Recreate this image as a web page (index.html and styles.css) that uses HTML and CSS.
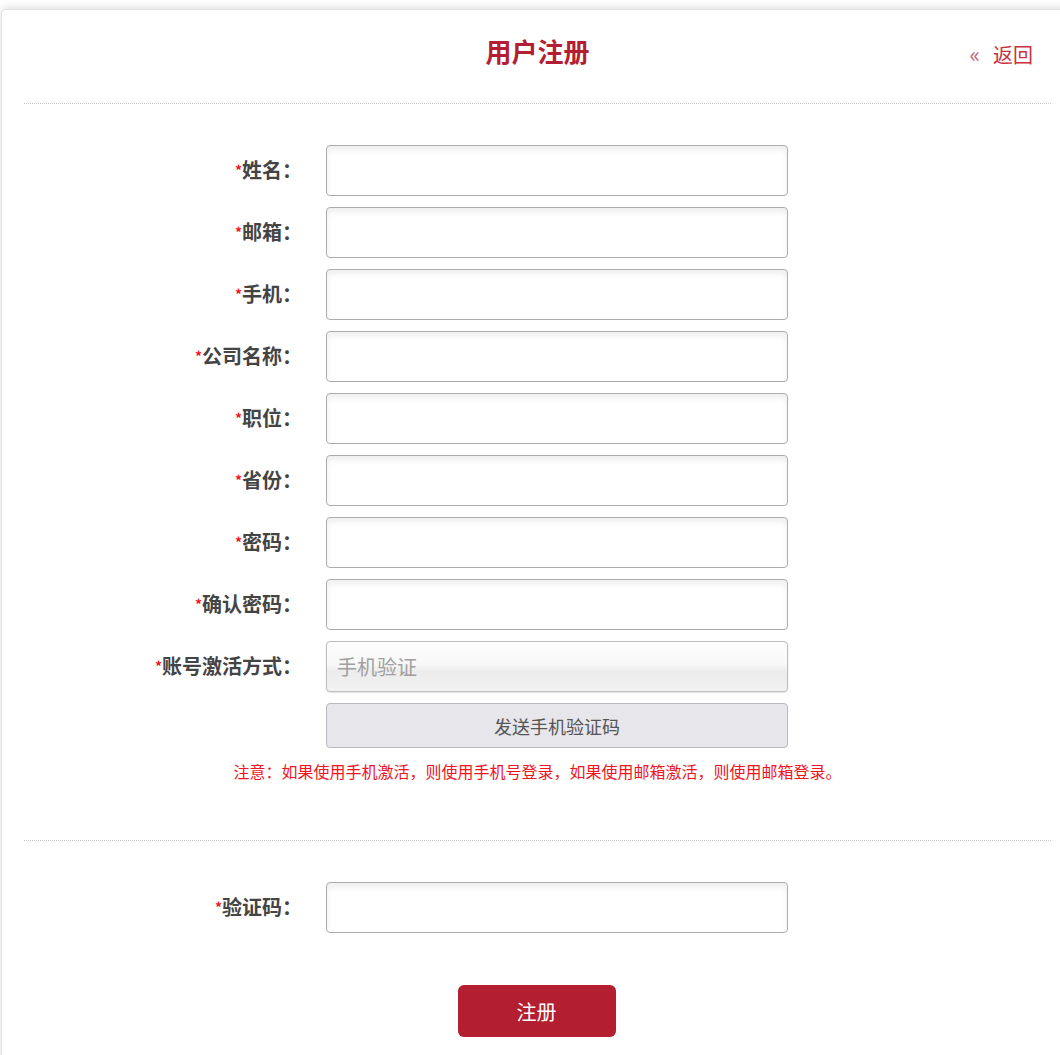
FILE: index.html
```html
<!DOCTYPE html>
<html lang="zh-CN">
<head>
  <meta charset="UTF-8" />
  <title>用户注册</title>
  <link rel="stylesheet" href="styles.css">
</head>
<body>

  <div class="card">
    <header class="card-head">
      <h1>用户注册</h1>
      <a class="back" href="#"><span class="back-arrow">«</span>返回</a>
    </header>

    <form class="reg-form">
      <section class="form-part">
        <div class="row">
          <label class="label"><i>*</i>姓名：</label>
          <input class="field" type="text">
        </div>
        <div class="row">
          <label class="label"><i>*</i>邮箱：</label>
          <input class="field" type="text">
        </div>
        <div class="row">
          <label class="label"><i>*</i>手机：</label>
          <input class="field" type="text">
        </div>
        <div class="row">
          <label class="label"><i>*</i>公司名称：</label>
          <input class="field" type="text">
        </div>
        <div class="row">
          <label class="label"><i>*</i>职位：</label>
          <input class="field" type="text">
        </div>
        <div class="row">
          <label class="label"><i>*</i>省份：</label>
          <input class="field" type="text">
        </div>
        <div class="row">
          <label class="label"><i>*</i>密码：</label>
          <input class="field" type="password">
        </div>
        <div class="row">
          <label class="label"><i>*</i>确认密码：</label>
          <input class="field" type="password">
        </div>
        <div class="row">
          <label class="label"><i>*</i>账号激活方式：</label>
          <div class="field select">手机验证</div>
        </div>
        <div class="row">
          <span class="label"></span>
          <button class="send-btn" type="button">发送手机验证码</button>
        </div>
        <p class="note">注意：如果使用手机激活，则使用手机号登录，如果使用邮箱激活，则使用邮箱登录。</p>
      </section>

      <section class="form-part">
        <div class="row">
          <label class="label"><i>*</i>验证码：</label>
          <input class="field" type="text">
        </div>
        <div class="actions">
          <button class="submit-btn" type="button">注册</button>
        </div>
      </section>
    </form>
  </div>

</body>
</html>
```

FILE: styles.css
```css
* {
  margin: 0;
  padding: 0;
  box-sizing: border-box;
}

html, body {
  overflow: hidden;
}

body {
  font-family: "Noto Sans CJK SC", "Noto Sans", sans-serif;
  background-color: #fff;
  color: #444;
  padding-top: 9px;
}

.card {
  width: 1073px;
  margin-left: 1px;
  padding: 0 22px;
  min-height: 1060px;
  background-color: #fff;
  border: 1px solid #e2e2e2;
  border-radius: 5px 5px 0 0;
  box-shadow: 0 -2px 9px rgba(0,0,0,0.12);
}

.card-head {
  height: 94px;
  border-bottom: 1px dotted #c8c8c8;
  display: flex;
  align-items: center;
  justify-content: center;
  position: relative;
}

.card-head h1 {
  font-size: 26px;
  font-weight: 700;
  color: #b31e33;
  margin-top: -13px;
}

.back {
  position: absolute;
  right: 18px;
  top: 27px;
  font-size: 20px;
  color: #c8323e;
  text-decoration: none;
}

.back-arrow {
  color: #c0607a;
  font-size: 22px;
  margin-right: 13px;
}

.form-part {
  padding-top: 41px;
  border-bottom: 1px dotted #c8c8c8;
}

.form-part:last-child {
  border-bottom: none;
}

.row {
  display: flex;
  align-items: center;
  margin-bottom: 11px;
}

.label {
  width: 278px;
  margin-right: 24px;
  text-align: right;
  font-size: 20px;
  font-weight: 700;
  color: #444;
  margin-top: -2px;
}

.label i {
  font-style: normal;
  font-size: 14px;
  color: #f0141e;
  vertical-align: 2px;
}

.field {
  width: 462px;
  height: 51px;
  border: 1px solid #acacac;
  border-radius: 4px;
  background-color: #fff;
  box-shadow: inset 0 4px 6px rgba(0,0,0,0.07);
  font-family: inherit;
  font-size: 20px;
  padding: 0 10px;
}

.select {
  display: flex;
  align-items: center;
  color: #a0a0a0;
  border-color: #bdbdbd;
  background: linear-gradient(#fdfdfd 0%, #f8f8f8 45%, #ececec 60%, #f2f2f2 100%);
  box-shadow: 0 1px 2px rgba(0,0,0,0.12);
}

.send-btn {
  width: 462px;
  height: 45px;
  border: 1px solid #b8b8c0;
  border-radius: 4px;
  background-color: #e6e6eb;
  font-family: inherit;
  font-size: 18px;
  color: #555;
}

.note {
  text-align: center;
  font-size: 16px;
  color: #f0141e;
  padding: 0;
  height: 81px;
}

.actions {
  display: flex;
  justify-content: center;
  padding: 41px 0 0 0;
}

.submit-btn {
  width: 158px;
  height: 52px;
  border: none;
  border-radius: 6px;
  background-color: #b31e31;
  color: #fff;
  font-family: inherit;
  font-size: 20px;
  margin-left: -2px;
}
```
